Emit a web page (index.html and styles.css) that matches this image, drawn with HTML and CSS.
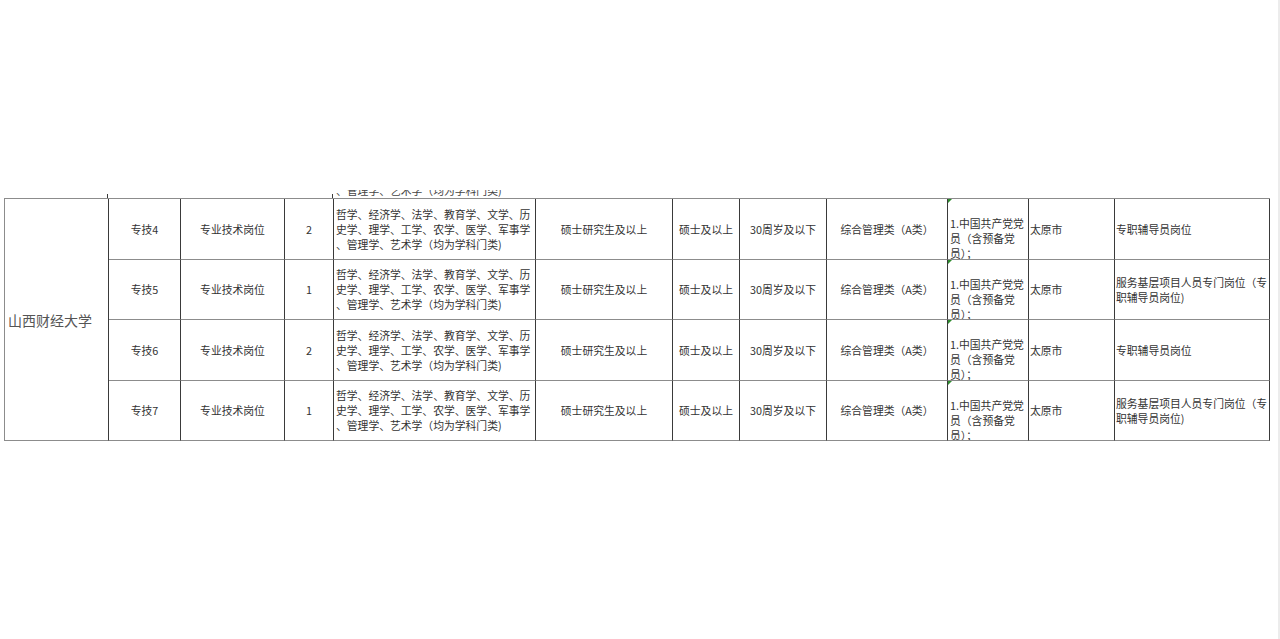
FILE: index.html
```html
<!DOCTYPE html>
<html lang="zh-CN">
<head>
<meta charset="utf-8">
<title>山西财经大学 岗位表</title>
<link rel="stylesheet" href="styles.css">
</head>
<body>
<div class="page">
  <main class="sheet">
    <div class="overflow-strip">
      <div class="tick t1"></div>
      <div class="tick t2"></div>
      <div class="strip-text"><span>、管理学、艺术学（均为学科门类)</span></div>
    </div>
    <div class="grid">
      <div class="cell school">山西财经大学</div>

      <div class="cell">专技4</div>
      <div class="cell">专业技术岗位</div>
      <div class="cell">2</div>
      <div class="cell major"><div>哲学、经济学、法学、教育学、文学、历<br>史学、理学、工学、农学、医学、军事学<br>、管理学、艺术学（均为学科门类)</div></div>
      <div class="cell">硕士研究生及以上</div>
      <div class="cell">硕士及以上</div>
      <div class="cell">30周岁及以下</div>
      <div class="cell">综合管理类（A类）</div>
      <div class="cell req"><div>1.中国共产党党<br>员（含预备党<br>员）；</div></div>
      <div class="cell left">太原市</div>
      <div class="cell left">专职辅导员岗位</div>

      <div class="cell">专技5</div>
      <div class="cell">专业技术岗位</div>
      <div class="cell">1</div>
      <div class="cell major"><div>哲学、经济学、法学、教育学、文学、历<br>史学、理学、工学、农学、医学、军事学<br>、管理学、艺术学（均为学科门类)</div></div>
      <div class="cell">硕士研究生及以上</div>
      <div class="cell">硕士及以上</div>
      <div class="cell">30周岁及以下</div>
      <div class="cell">综合管理类（A类）</div>
      <div class="cell req"><div>1.中国共产党党<br>员（含预备党<br>员）；</div></div>
      <div class="cell left">太原市</div>
      <div class="cell left"><div>服务基层项目人员专门岗位（专<br>职辅导员岗位)</div></div>

      <div class="cell">专技6</div>
      <div class="cell">专业技术岗位</div>
      <div class="cell">2</div>
      <div class="cell major"><div>哲学、经济学、法学、教育学、文学、历<br>史学、理学、工学、农学、医学、军事学<br>、管理学、艺术学（均为学科门类)</div></div>
      <div class="cell">硕士研究生及以上</div>
      <div class="cell">硕士及以上</div>
      <div class="cell">30周岁及以下</div>
      <div class="cell">综合管理类（A类）</div>
      <div class="cell req"><div>1.中国共产党党<br>员（含预备党<br>员）；</div></div>
      <div class="cell left">太原市</div>
      <div class="cell left">专职辅导员岗位</div>

      <div class="cell">专技7</div>
      <div class="cell">专业技术岗位</div>
      <div class="cell">1</div>
      <div class="cell major"><div>哲学、经济学、法学、教育学、文学、历<br>史学、理学、工学、农学、医学、军事学<br>、管理学、艺术学（均为学科门类)</div></div>
      <div class="cell">硕士研究生及以上</div>
      <div class="cell">硕士及以上</div>
      <div class="cell">30周岁及以下</div>
      <div class="cell">综合管理类（A类）</div>
      <div class="cell req"><div>1.中国共产党党<br>员（含预备党<br>员）；</div></div>
      <div class="cell left">太原市</div>
      <div class="cell left"><div>服务基层项目人员专门岗位（专<br>职辅导员岗位)</div></div>
    </div>
  </main>
  <div class="scroll-edge"></div>
</div>
</body>
</html>
```

FILE: styles.css
```css
html, body {
  margin: 0;
  padding: 0;
  background: #ffffff;
}

body {
  font-family: "Noto Sans CJK SC", "Noto Sans", sans-serif;
  color: #333333;
}

.page {
  display: flex;
  width: 1280px;
  height: 639px;
  overflow: hidden;
}

.sheet {
  flex: 1;
  padding-top: 190px;
  padding-left: 4px;
}

.scroll-edge {
  width: 2px;
  height: 639px;
  background: #ececec;
}

.overflow-strip {
  display: flex;
  align-items: flex-end;
  height: 8px;
}

.tick {
  width: 1px;
  height: 4px;
  background: #3a3a3a;
}

.t1 {
  margin-left: 103px;
}

.t2 {
  margin-left: 224px;
}

.strip-text {
  height: 8px;
  margin-left: 3px;
  overflow: hidden;
  font-size: 10.8px;
  line-height: 15px;
  white-space: nowrap;
  color: #444444;
}

.strip-text span {
  display: block;
  margin-top: -7px;
}

.grid {
  display: grid;
  grid-template-columns: 104px 72px 104px 49px 202px 137px 67px 87px 121px 81px 86px 155px;
  grid-template-rows: 61px 60px 61px 60px;
  width: max-content;
  border-top: 1px solid #8c8c8c;
  border-left: 1px solid #8c8c8c;
}

.cell {
  box-sizing: border-box;
  display: flex;
  align-items: center;
  justify-content: center;
  border-right: 1px solid #3a3a3a;
  border-bottom: 1px solid #8c8c8c;
  font-size: 10.8px;
  line-height: 15px;
  white-space: nowrap;
  overflow: hidden;
}

.school {
  grid-row: 1 / span 4;
  justify-content: flex-start;
  padding-left: 3px;
  padding-top: 3px;
  font-family: "Liberation Serif", "Noto Sans CJK SC", serif;
  font-size: 14px;
  color: #555555;
}

.major {
  justify-content: flex-start;
  padding-left: 2px;
}

.req {
  position: relative;
  align-items: flex-start;
  justify-content: flex-start;
  padding-top: 17px;
  padding-left: 2px;
}

.req::before {
  content: "";
  position: absolute;
  top: 0;
  left: 0;
  width: 0;
  height: 0;
  border-top: 4px solid #2e8b2e;
  border-right: 4px solid transparent;
}

.left {
  justify-content: flex-start;
  padding-left: 1px;
}
```
